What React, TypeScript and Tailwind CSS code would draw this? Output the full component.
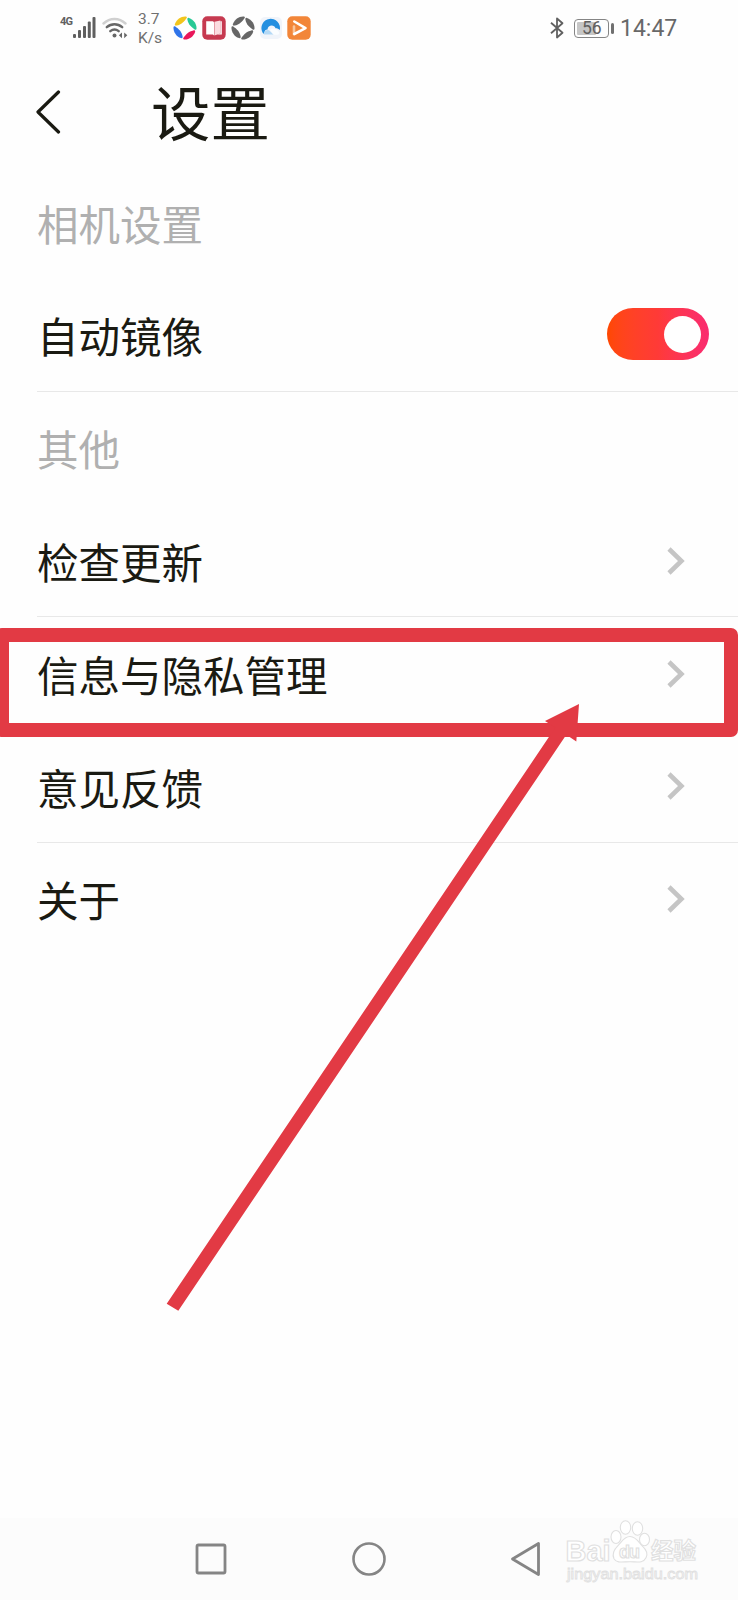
import React, { useState } from 'react';

interface SettingRowProps {
  label: string;
  divider?: boolean;
  children?: React.ReactNode;
}

function SignalIcon() {
  return (
    <svg width="23" height="23" viewBox="0 0 23 23" fill="#5f5f5f">
      <rect x="0" y="17" width="3" height="4" rx="1" />
      <rect x="5" y="13" width="3" height="8" rx="1" />
      <rect x="10" y="9" width="3" height="12" rx="1" />
      <rect x="14.8" y="4.5" width="3" height="16.5" rx="1" />
      <rect x="19.5" y="0" width="3" height="21" rx="1" />
    </svg>
  );
}

function WifiIcon() {
  return (
    <svg width="26" height="22" viewBox="0 0 26 22" fill="none" strokeLinecap="round">
      <path d="M1.5 6.5C8 .4 17 .4 23.5 6.5" stroke="#d0d0d0" strokeWidth="2.4" />
      <path d="M4.8 10.2c4.6-4 10.8-4 15.4 0" stroke="#666" strokeWidth="2.4" />
      <path d="M8.3 14.2c2.6-2.2 5.8-2.2 8.4 0" stroke="#666" strokeWidth="2.4" />
      <circle cx="12.5" cy="18.6" r="2" fill="#666" />
      <path d="M20 15.4v5.8l-3.1-2.9zM22.2 15.4v5.8l3.1-2.9z" fill="#666" />
    </svg>
  );
}

function PinwheelIcon({ colors }: { colors: string[] }) {
  return (
    <svg width="24" height="24" viewBox="0 0 24 24">
      {colors.map((color, i) => (
        <path
          key={i}
          d="M1.9 8C3.6 3.2 8 .2 12.8.5c1.1.1 1.3.9.7 1.8C11.2 5.6 8.4 8.8 3.6 9.6 2.3 9.8 1.5 9.2 1.9 8z"
          fill={color}
          transform={`rotate(${i * 90} 12 12)`}
        />
      ))}
    </svg>
  );
}

function BookIcon() {
  return (
    <svg width="24" height="24" viewBox="0 0 24 24">
      <rect x=".3" y=".3" width="23.4" height="23.4" rx="5" fill="#c63a50" />
      <path d="M4.2 5.2h6c1 0 1.6.5 1.8 1.2v13c-.5-.7-1-.9-1.8-.9h-6z" fill="#fff" />
      <path d="M12.4 5.8l6-1.4v13.2l-6 1.8z" fill="#fbdce0" />
      <path d="M18.4 5.2h1.4v13.3h-4.6l3.2-1z" fill="#fff" />
    </svg>
  );
}

function CloudIcon() {
  return (
    <svg width="22" height="24" viewBox="0 0 22 24">
      <rect x="0" y="1" width="22" height="22" rx="5" fill="#f0f4fa" />
      <path d="M2.5 16.5A9.3 9.3 0 1 1 19.8 14c-1.5-1.7-3.3-2-4.3-1.8-1-3.8-7.8-3.6-8 1.4-2 .1-3.2 1.2-3.5 4.4z" fill="#238fe0" />
      <path d="M4 18.6c.1-3 1.6-4.5 4.2-4.5 1.2 0 4 3.6 5.8 4.5z" fill="#b3d9f6" />
      <path d="M10 14c2.7-2.8 7.8-1.2 9.2 2.8 0 1.4-.4 1.9-1.5 1.9h-4.2z" fill="#fafdff" />
    </svg>
  );
}

function PlayIcon() {
  return (
    <svg width="24" height="24" viewBox="0 0 24 24" fill="none">
      <rect x=".3" y=".3" width="23.4" height="23.4" rx="5" fill="#f28639" />
      <path d="M7 10.5v7.8" stroke="#f9c69c" strokeWidth="2.6" strokeLinecap="round" />
      <path d="M7.3 5.5l11.2 6.6L7.3 18" stroke="#fff" strokeWidth="2.6" strokeLinecap="round" strokeLinejoin="round" />
    </svg>
  );
}

function StatusBar() {
  return (
    <header className="flex h-[56px] items-center pl-[60px] pr-[60px] font-['Roboto',sans-serif] text-[#606060]">
      <span className="mb-[13px] w-[13px] text-[11px] font-bold leading-none tracking-[-0.8px]">4G</span>
      <SignalIcon />
      <div className="ml-[6px] flex">
        <WifiIcon />
      </div>
      <div className="ml-[10px] w-[35px] pt-px text-[15.5px] leading-[18.5px] text-[#707070]">
        <div>3.7</div>
        <div>K/s</div>
      </div>
      <div className="flex items-center gap-[5px]">
        <PinwheelIcon colors={['#f2c51c', '#28c995', '#e9165a', '#2f74e9']} />
        <BookIcon />
        <PinwheelIcon colors={['#666', '#666', '#666', '#666']} />
        <CloudIcon />
        <PlayIcon />
      </div>

      <div className="ml-auto flex items-center">
        <svg width="14" height="22" viewBox="0 0 14 22" fill="none" stroke="#606060" strokeWidth="1.8" strokeLinejoin="round">
          <path d="M1 5.8l11.5 10L7 20.5v-19l5.5 4.7L1 16.2" />
        </svg>
        <div className="ml-[10px] flex h-[19px] w-[35px] items-center rounded-[4px] border border-[#858585] p-[2px]">
          <div className="flex h-full w-[19px] items-center rounded-[1px] bg-[#c6c6c6] pl-[5px] pt-px text-[17.5px] leading-none tracking-[-0.2px]">56</div>
        </div>
        <div className="ml-[2px] h-[11px] w-[3px] rounded-full bg-[#707070]" />
        <span className="ml-[6px] w-[58px] whitespace-nowrap text-[23px] leading-none text-[#686868]">14:47</span>
      </div>
    </header>
  );
}

function SectionTitle({ label }: { label: string }) {
  return (
    <h2 className="flex h-[112.8px] items-center pl-[37px] pt-[2px] text-[41.5px] leading-none text-[#b0b0b0]">{label}</h2>
  );
}

function SettingRow({ label, divider, children }: SettingRowProps) {
  return (
    <div className={`ml-[37px] flex h-[112.8px] items-center justify-between border-b ${divider ? 'border-[#e8e8e8]' : 'border-transparent'}`}>
      <span className="pt-[3px] text-[41.5px] leading-none">{label}</span>
      {children}
    </div>
  );
}

function Chevron() {
  return (
    <svg className="mr-[53px] mt-px" width="18" height="28" viewBox="0 0 18 28" fill="none" stroke="#c5c5c5" strokeWidth="4.6">
      <path d="M2 2l12.4 12L2 26" />
    </svg>
  );
}

function Toggle() {
  const [on, setOn] = useState(true);

  return (
    <button
      role="switch"
      aria-checked={on}
      onClick={() => setOn(!on)}
      className={`mb-px mr-[29px] flex h-[52px] w-[102px] items-center rounded-full px-[8px] ${
        on ? 'justify-end bg-linear-to-r from-[#ff4800] via-[#ff3a37] to-[#fa2b70]' : 'justify-start bg-gray-300'
      }`}
    >
      <span className="h-[37px] w-[37px] rounded-full bg-white" />
    </button>
  );
}

function Watermark() {
  return (
    <svg className="absolute left-[560px] top-0" width="150" height="76" viewBox="0 0 150 76" fill="#fff" stroke="#e0e0e0" strokeWidth="1.1">
      <text x="5.5" y="42.5" fontSize="29" fontWeight="700" textLength="45" lengthAdjust="spacingAndGlyphs" fontFamily="Liberation Sans, sans-serif">Bai</text>
      <ellipse cx="56" cy="19" rx="5" ry="6.5" />
      <ellipse cx="65.5" cy="9.5" rx="5.2" ry="6.7" />
      <ellipse cx="77.5" cy="10.5" rx="5.2" ry="6.7" />
      <ellipse cx="84.5" cy="21.5" rx="5" ry="6.2" />
      <path d="M70 18.5c6 0 8.5 5.5 12 9.2 5 5 6 8 4 12-3 6-9 4-16 4s-13 2-16-3c-2-4-1-8 4-13 3.6-3.6 6-9.2 12-9.2z" />
      <text x="59" y="39.5" fontSize="18" fontWeight="700" textLength="21" fontFamily="Liberation Sans, sans-serif">du</text>
      <text x="91" y="40.5" fontSize="22.5" fontWeight="700" textLength="45" fontFamily="Noto Sans CJK SC, sans-serif">经验</text>
      <text x="7" y="60.5" fontSize="14" strokeWidth=".8" textLength="131" lengthAdjust="spacingAndGlyphs" fontFamily="Liberation Sans, sans-serif">jingyan.baidu.com</text>
    </svg>
  );
}

function NavBar() {
  return (
    <nav className="relative mt-auto h-[82px] bg-[#fcfcfc]">
      <div className="flex h-full items-center pl-[195px]">
        <svg width="32" height="32" viewBox="0 0 32 32" fill="none" stroke="#858585" strokeWidth="2.8">
          <rect x="2" y="2" width="28" height="28" rx="1.5" />
        </svg>
        <svg className="ml-[125px]" width="34" height="34" viewBox="0 0 34 34" fill="none" stroke="#858585" strokeWidth="2.6">
          <circle cx="17" cy="17" r="15.5" />
        </svg>
        <svg className="ml-[125px]" width="30" height="36" viewBox="0 0 30 36" fill="none" stroke="#858585" strokeWidth="2.8" strokeLinejoin="round">
          <path d="M27.5 2.5v31L1.5 18z" />
        </svg>
      </div>
      <Watermark />
    </nav>
  );
}

export default function App() {
  return (
    <div className="relative flex h-[1600px] w-[738px] flex-col overflow-hidden bg-[#fefefe] font-['Noto_Sans_CJK_SC',sans-serif] text-[#1a1a12]">
      <StatusBar />

      <div className="flex h-[110px] items-center pl-[35px]">
        <svg className="mt-[2px]" width="26" height="44" viewBox="0 0 26 44" fill="none" stroke="#1a1a12" strokeWidth="3.2" strokeLinecap="round" strokeLinejoin="round">
          <path d="M23.5 2L3 22l20.5 20" />
        </svg>
        <h1 className="ml-[90px] text-[59.5px] leading-none">设置</h1>
      </div>

      <main>
        <SectionTitle label="相机设置" />
        <SettingRow label="自动镜像" divider>
          <Toggle />
        </SettingRow>
        <SectionTitle label="其他" />
        <SettingRow label="检查更新" divider>
          <Chevron />
        </SettingRow>
        <SettingRow label="信息与隐私管理">
          <Chevron />
        </SettingRow>
        <SettingRow label="意见反馈" divider>
          <Chevron />
        </SettingRow>
        <SettingRow label="关于">
          <Chevron />
        </SettingRow>
      </main>

      <NavBar />

      {/* Highlight frame and arrow over the privacy row */}
      <div className="pointer-events-none absolute -left-[5px] top-[628px] h-[109px] w-[743px] rounded-[7px] border-[14px] border-[#e23a44]" />
      <svg className="pointer-events-none absolute inset-0" width="738" height="1600" viewBox="0 0 738 1600">
        <path d="M579 704L545 721L555.3 727.6L166.7 1303.7L178.3 1310.7L566.3 734.8L576.3 741.5z" fill="#e23a44" />
      </svg>
    </div>
  );
}
